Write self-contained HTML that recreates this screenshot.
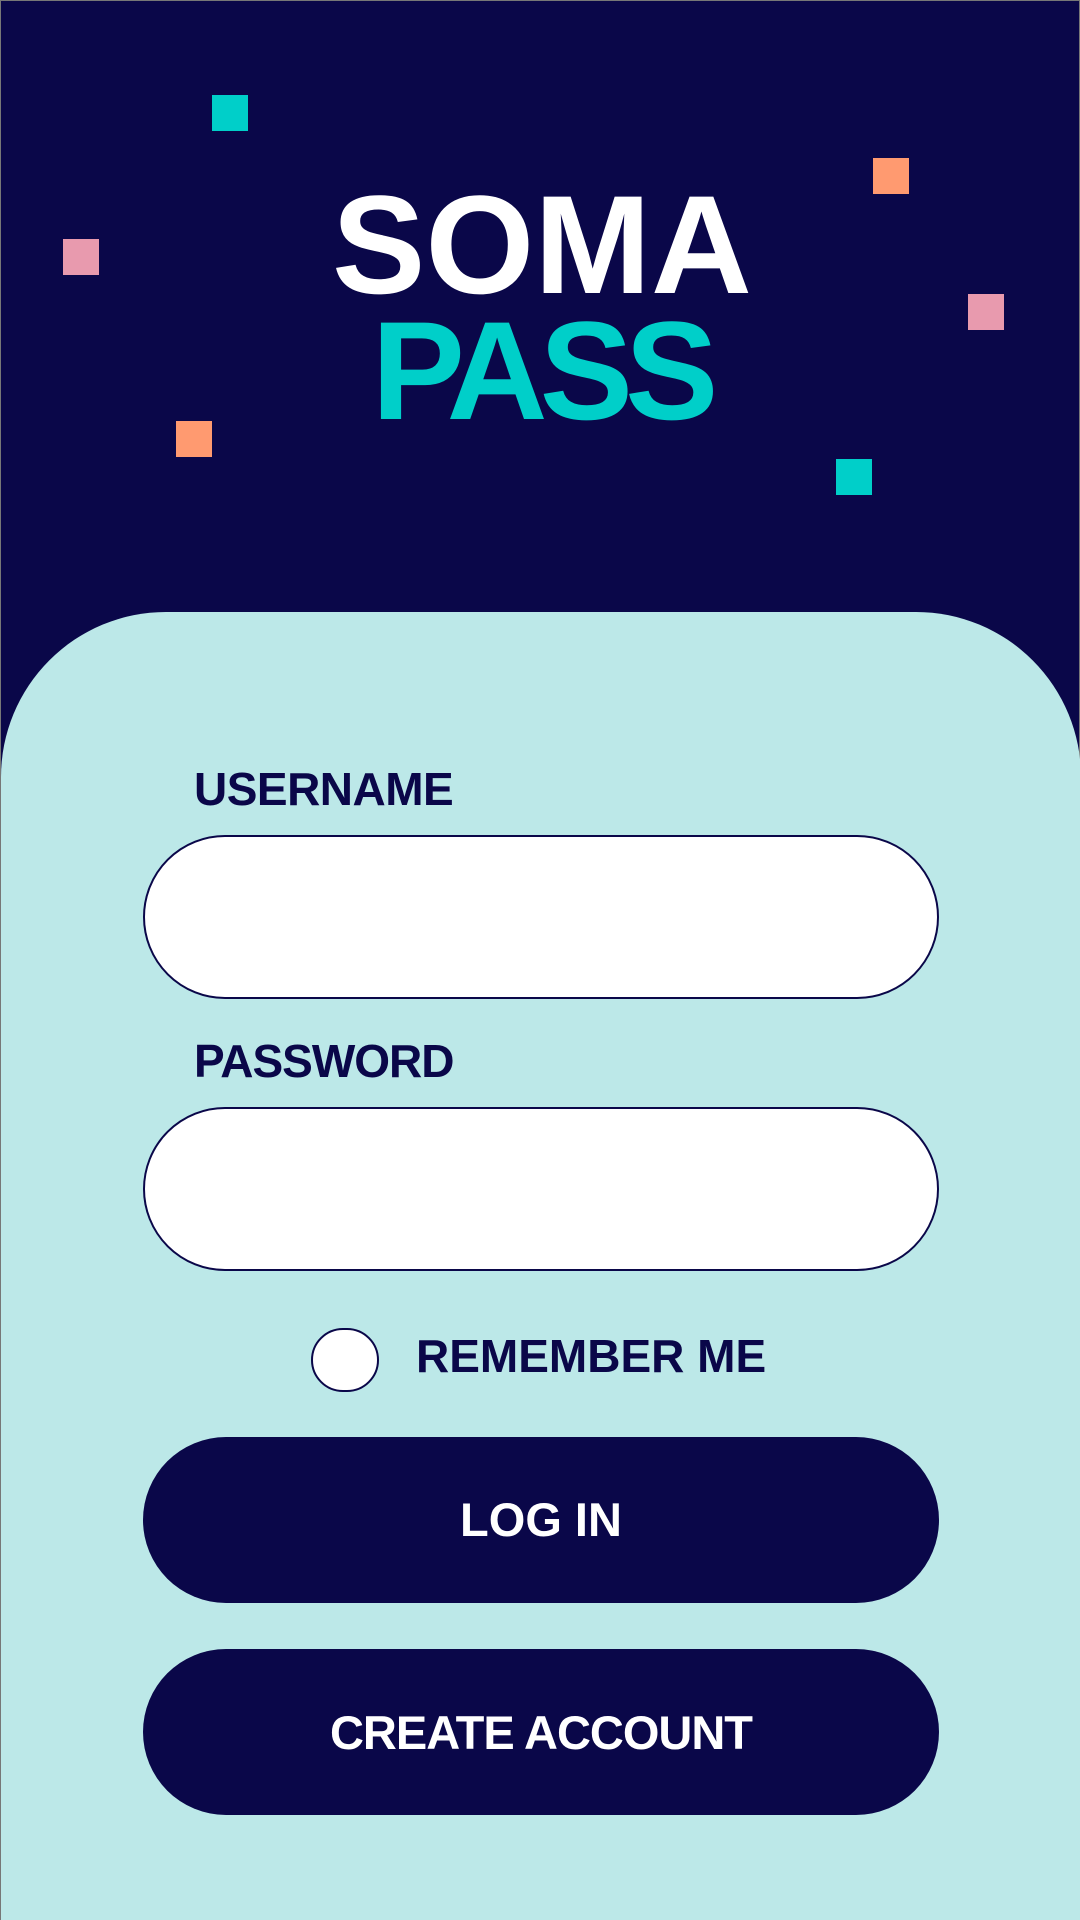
<!DOCTYPE html>
<html><head><meta charset="utf-8"><style>
*{margin:0;padding:0;box-sizing:border-box}
html,body{width:1080px;height:1920px;overflow:hidden}
body{background:#0a0749;position:relative;font-family:"Liberation Sans",sans-serif;font-weight:bold;border:1px solid #777}
.sq{position:absolute;width:36px;height:36px}
.t{position:absolute;line-height:1;white-space:nowrap}
.card{position:absolute;left:0;top:611px;width:1080px;height:1320px;background:#bce8e8;border-radius:165px 165px 0 0}
.inp{position:absolute;left:142px;width:796px;height:164px;background:#fff;border:2px solid #0a0749;border-radius:82px}
.btn{position:absolute;left:142px;width:796px;height:166px;background:#0a0749;border-radius:83px}
</style></head><body>
<div class="sq" style="left:211px;top:94px;background:#00cfc9"></div>
<div class="sq" style="left:872px;top:157px;background:#ff9a70"></div>
<div class="sq" style="left:62px;top:238px;background:#e89aae"></div>
<div class="sq" style="left:967px;top:293px;background:#e89aae"></div>
<div class="sq" style="left:175px;top:420px;background:#ff9a70"></div>
<div class="sq" style="left:835px;top:458px;background:#00cfc9"></div>
<div class="t" style="left:0;width:1080px;text-align:center;top:174px;font-size:140px;color:#fff;padding-left:2px">SOMA</div>
<div class="t" style="left:0;width:1080px;text-align:center;top:300px;font-size:140px;color:#00cfc9;letter-spacing:-8px">PASS</div>
<div class="card"></div>
<div class="t" style="left:193px;top:765px;font-size:46px;color:#0a0749;letter-spacing:-0.5px">USERNAME</div>
<div class="inp" style="top:834px"></div>
<div class="t" style="left:193px;top:1037px;font-size:46px;color:#0a0749;letter-spacing:-1px">PASSWORD</div>
<div class="inp" style="top:1106px"></div>
<div style="position:absolute;left:310px;top:1327px;width:68px;height:64px;background:#fff;border:2px solid #0a0749;border-radius:32px"></div>
<div class="t" style="left:415px;top:1332px;font-size:46px;color:#0a0749">REMEMBER ME</div>
<div class="btn" style="top:1436px"></div>
<div class="t" style="left:0;width:1080px;text-align:center;top:1495px;font-size:47px;color:#fff">LOG IN</div>
<div class="btn" style="top:1648px"></div>
<div class="t" style="left:0;width:1080px;text-align:center;top:1708px;font-size:47px;color:#fff;letter-spacing:-1px">CREATE ACCOUNT</div>
</body></html>
